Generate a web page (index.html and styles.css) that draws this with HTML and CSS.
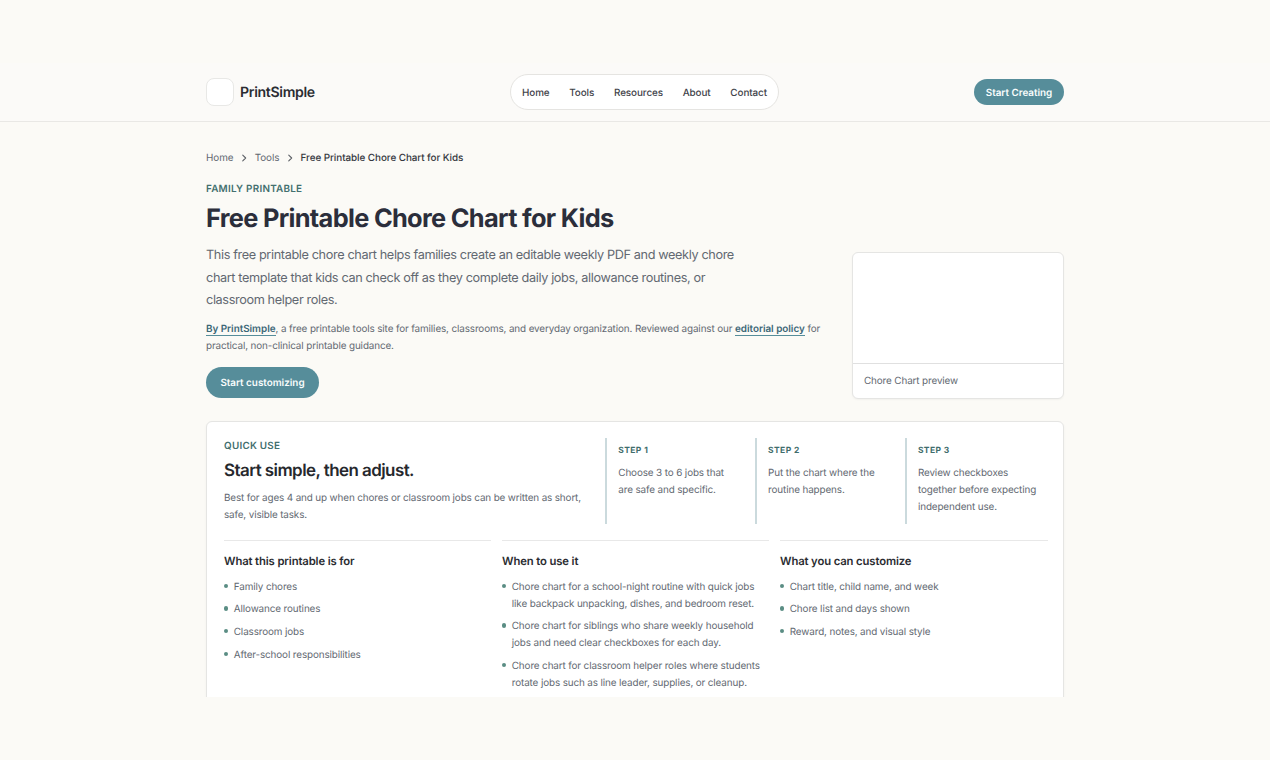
FILE: index.html
```html
<!DOCTYPE html>
<html lang="en">
<head>
<meta charset="utf-8">
<title>Free Printable Chore Chart for Kids | PrintSimple</title>
<link rel="stylesheet" href="styles.css">
</head>
<body>
<div class="viewport">
  <header class="header">
    <div class="header-inner">
      <a class="brand"><span class="brand-mark"></span><span class="brand-name">PrintSimple</span></a>
      <nav class="nav"><a>Home</a><a>Tools</a><a>Resources</a><a>About</a><a>Contact</a></nav>
      <a class="button button-small">Start Creating</a>
    </div>
  </header>
  <main class="main">
    <div class="crumbs">
      <a>Home</a>
      <svg class="chevron" viewBox="0 0 12 12"><path d="M4.5 2.5 8 6l-3.5 3.5"/></svg>
      <a>Tools</a>
      <svg class="chevron" viewBox="0 0 12 12"><path d="M4.5 2.5 8 6l-3.5 3.5"/></svg>
      <span class="crumb-current">Free Printable Chore Chart for Kids</span>
    </div>
    <section class="hero">
      <div class="hero-copy">
        <p class="eyebrow">FAMILY PRINTABLE</p>
        <h1 class="title">Free Printable Chore Chart for Kids</h1>
        <p class="lead">This free printable chore chart helps families create an editable weekly PDF and weekly chore chart template that kids can check off as they complete daily jobs, allowance routines, or classroom helper roles.</p>
        <p class="byline"><a class="link">By PrintSimple</a>, a free printable tools site for families, classrooms, and everyday organization. Reviewed against our <a class="link">editorial policy</a> for practical, non-clinical printable guidance.</p>
        <a class="button button-large">Start customizing</a>
      </div>
      <figure class="preview">
        <div class="preview-image"></div>
        <figcaption class="preview-caption">Chore Chart preview</figcaption>
      </figure>
    </section>
    <section class="card">
      <div class="quick">
        <div class="quick-intro">
          <p class="eyebrow">QUICK USE</p>
          <h2 class="subtitle">Start simple, then adjust.</h2>
          <p class="text">Best for ages 4 and up when chores or classroom jobs can be written as short, safe, visible tasks.</p>
        </div>
        <div class="step"><p class="step-label">STEP 1</p><p class="text">Choose 3 to 6 jobs that are safe and specific.</p></div>
        <div class="step"><p class="step-label">STEP 2</p><p class="text">Put the chart where the routine happens.</p></div>
        <div class="step"><p class="step-label">STEP 3</p><p class="text">Review checkboxes together before expecting independent use.</p></div>
      </div>
      <div class="details">
        <div class="detail">
          <h3 class="detail-title">What this printable is for</h3>
          <ul class="list"><li>Family chores</li><li>Allowance routines</li><li>Classroom jobs</li><li>After-school responsibilities</li></ul>
        </div>
        <div class="detail">
          <h3 class="detail-title">When to use it</h3>
          <ul class="list"><li>Chore chart for a school-night routine with quick jobs like backpack unpacking, dishes, and bedroom reset.</li><li>Chore chart for siblings who share weekly household jobs and need clear checkboxes for each day.</li><li>Chore chart for classroom helper roles where students rotate jobs such as line leader, supplies, or cleanup.</li></ul>
        </div>
        <div class="detail">
          <h3 class="detail-title">What you can customize</h3>
          <ul class="list"><li>Chart title, child name, and week</li><li>Chore list and days shown</li><li>Reward, notes, and visual style</li></ul>
        </div>
      </div>
    </section>
  </main>
</div>
</body>
</html>
```

FILE: styles.css
```css
* { box-sizing: border-box; }

body {
  margin: 0;
  height: 760px;
  padding: 63px 0;
  overflow: hidden;
  background: #fbfaf6;
  color: #626871;
  font-family: Inter, "Liberation Sans", sans-serif;
  font-size: 9.88px;
  line-height: 17px;
  letter-spacing: -0.12px;
  text-rendering: geometricPrecision;
}

h1, h2, h3, p, ul, figure { margin: 0; padding: 0; }

.viewport { height: 634px; overflow: hidden; }

.header {
  height: 59px;
  border-bottom: 1px solid #e9e8e5;
  background: #fbfaf8;
}

.header-inner {
  display: flex;
  align-items: center;
  justify-content: space-between;
  width: 858px;
  height: 58px;
  margin: 0 auto;
}

.brand { display: flex; align-items: center; gap: 6px; width: 205px; }

.brand-mark {
  width: 28px;
  height: 28px;
  border: 1px solid #e8e8e6;
  border-radius: 8px;
  background: #fff;
}

.brand-name {
  padding-top: 1px;
  color: #2b2d33;
  font-size: 14.1px;
  font-weight: 600;
  letter-spacing: -0.33px;
}

.nav {
  display: flex;
  align-items: center;
  gap: 19.7px;
  height: 36px;
  margin-left: 9px;
  padding: 2px 10.8px 0;
  border: 1px solid #e5e4e1;
  border-radius: 18px;
  background: #fff;
  color: #3f434a;
  font-weight: 500;
  letter-spacing: -0.08px;
}

.button {
  display: flex;
  align-items: center;
  justify-content: center;
  padding-top: 2px;
  border-radius: 20px;
  background: #568d9a;
  color: #f8fcfc;
  font-weight: 600;
  letter-spacing: 0;
}

.button-small { width: 90px; height: 26px; margin-left: 105px; }

.button-large { width: 113px; height: 31px; margin-top: 12px; }

.main { width: 858px; margin: 0 auto; padding-top: 28px; }

.crumbs { display: flex; align-items: center; height: 17px; letter-spacing: -0.06px; }

.chevron {
  width: 10px;
  height: 10px;
  margin: -2px 5.6px 0;
  fill: none;
  stroke: #5c6066;
  stroke-width: 1.3;
  stroke-linecap: round;
  stroke-linejoin: round;
}

.crumb-current { color: #35383e; font-weight: 500; }

.hero {
  display: flex;
  align-items: flex-end;
  justify-content: space-between;
  margin-top: 14px;
}

.hero-copy { width: 624px; }

.eyebrow {
  color: #43706f;
  font-weight: 600;
  letter-spacing: 0.25px;
}

.title {
  margin-top: 5px;
  color: #2b2e3b;
  font-size: 25.4px;
  line-height: 31px;
  font-weight: 700;
  letter-spacing: -0.69px;
}

.lead {
  width: 542px;
  height: 68px;
  margin-top: 11px;
  font-size: 12.7px;
  line-height: 22.58px;
  letter-spacing: -0.37px;
}

.byline { margin-top: 8px; }

.link {
  border-bottom: 1px solid #568d9a;
  color: #3c6776;
  font-weight: 600;
  letter-spacing: -0.02px;
}

.preview {
  width: 212px;
  height: 147px;
  margin-bottom: -1px;
  border: 1px solid #e5e5e3;
  border-radius: 6px;
  background: #fff;
  box-shadow: 0 1px 2px rgb(0 0 0 / 4%);
}

.preview-image { height: 110px; }

.preview-caption {
  height: 35px;
  padding: 9px 11px;
  border-top: 1px solid #e0e0e0;
}

.card {
  height: 320px;
  margin-top: 23px;
  padding: 16px 15px 0 17px;
  border: 1px solid #e5e5e3;
  border-radius: 6px;
  background: #fff;
  box-shadow: 0 1px 3px rgb(0 0 0 / 4%);
}

.quick {
  display: grid;
  grid-template-columns: 370px 138.5px 138.5px 138.5px;
  gap: 11.3px;
  height: 85px;
}

.subtitle {
  margin-top: 5px;
  color: #26282d;
  font-size: 16.94px;
  line-height: 22px;
  font-weight: 600;
  letter-spacing: -0.55px;
}

.quick-intro .text { margin-top: 8px; letter-spacing: -0.13px; }

.step { padding: 5px 6px 0 11px; border-left: 2px solid #cbdadd; }

.step-label {
  color: #3f6d6c;
  font-size: 8.47px;
  font-weight: 700;
  letter-spacing: 0.4px;
}

.step .text { margin-top: 5px; }

.details {
  display: grid;
  grid-template-columns: 267px 267px 268px;
  gap: 11px;
  margin-top: 17px;
}

.detail { padding-top: 12px; border-top: 1px solid #e8e8e8; }

.detail-title {
  color: #2a2c31;
  font-size: 11.29px;
  line-height: 17px;
  font-weight: 600;
}

.list {
  display: grid;
  gap: 5.65px;
  margin-top: 8.6px;
  list-style: none;
}

.list li { display: flex; gap: 5.4px; }

.list li::before {
  content: "";
  flex: none;
  width: 4.4px;
  height: 4.4px;
  margin-top: 5px;
  border-radius: 50%;
  background: #5a8d84;
}
```
